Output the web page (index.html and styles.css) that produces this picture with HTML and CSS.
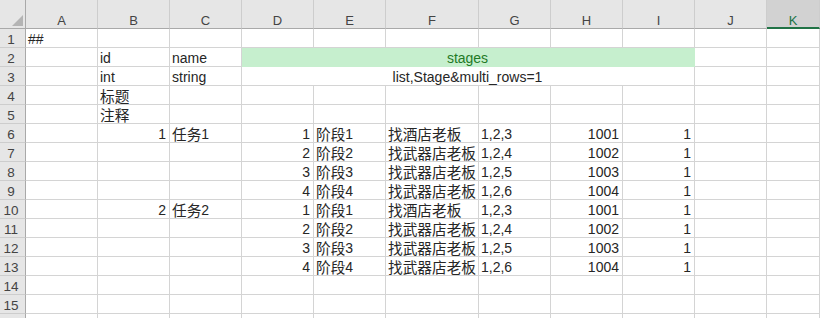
FILE: index.html
```html
<!DOCTYPE html>
<html>
<head>
<meta charset="utf-8">
<link rel="stylesheet" href="styles.css">
</head>
<body>
<div class="sheet">
  <div class="corner"><svg width="25" height="28" viewBox="0 0 25 28"><polygon points="23,15 23,26 12,26" fill="#b4b4b4"/></svg></div>
  <div class="ch">A</div><div class="ch">B</div><div class="ch">C</div><div class="ch">D</div><div class="ch">E</div><div class="ch">F</div><div class="ch">G</div><div class="ch">H</div><div class="ch">I</div><div class="ch">J</div><div class="ch sel">K</div>

  <div class="rh">1</div><div class="c">##</div><div class="c"></div><div class="c"></div><div class="c"></div><div class="c"></div><div class="c"></div><div class="c"></div><div class="c"></div><div class="c"></div><div class="c"></div><div class="c"></div>

  <div class="rh">2</div><div class="c"></div><div class="c">id</div><div class="c">name</div><div class="c m g">stages</div><div class="c"></div><div class="c"></div>

  <div class="rh">3</div><div class="c"></div><div class="c">int</div><div class="c">string</div><div class="c m">list,Stage&amp;multi_rows=1</div><div class="c"></div><div class="c"></div>

  <div class="rh">4</div><div class="c"></div><div class="c"><span class="zh">标题</span></div><div class="c"></div><div class="c"></div><div class="c"></div><div class="c"></div><div class="c"></div><div class="c"></div><div class="c"></div><div class="c"></div><div class="c"></div>

  <div class="rh">5</div><div class="c"></div><div class="c"><span class="zh">注释</span></div><div class="c"></div><div class="c"></div><div class="c"></div><div class="c"></div><div class="c"></div><div class="c"></div><div class="c"></div><div class="c"></div><div class="c"></div>

  <div class="rh">6</div><div class="c"></div><div class="c r">1</div><div class="c"><span class="zh">任务</span>1</div><div class="c r">1</div><div class="c"><span class="zh">阶段</span>1</div><div class="c"><span class="zh">找酒店老板</span></div><div class="c">1,2,3</div><div class="c r">1001</div><div class="c r">1</div><div class="c"></div><div class="c"></div>

  <div class="rh">7</div><div class="c"></div><div class="c"></div><div class="c"></div><div class="c r">2</div><div class="c"><span class="zh">阶段</span>2</div><div class="c"><span class="zh">找武器店老板</span></div><div class="c">1,2,4</div><div class="c r">1002</div><div class="c r">1</div><div class="c"></div><div class="c"></div>

  <div class="rh">8</div><div class="c"></div><div class="c"></div><div class="c"></div><div class="c r">3</div><div class="c"><span class="zh">阶段</span>3</div><div class="c"><span class="zh">找武器店老板</span></div><div class="c">1,2,5</div><div class="c r">1003</div><div class="c r">1</div><div class="c"></div><div class="c"></div>

  <div class="rh">9</div><div class="c"></div><div class="c"></div><div class="c"></div><div class="c r">4</div><div class="c"><span class="zh">阶段</span>4</div><div class="c"><span class="zh">找武器店老板</span></div><div class="c">1,2,6</div><div class="c r">1004</div><div class="c r">1</div><div class="c"></div><div class="c"></div>

  <div class="rh">10</div><div class="c"></div><div class="c r">2</div><div class="c"><span class="zh">任务</span>2</div><div class="c r">1</div><div class="c"><span class="zh">阶段</span>1</div><div class="c"><span class="zh">找酒店老板</span></div><div class="c">1,2,3</div><div class="c r">1001</div><div class="c r">1</div><div class="c"></div><div class="c"></div>

  <div class="rh">11</div><div class="c"></div><div class="c"></div><div class="c"></div><div class="c r">2</div><div class="c"><span class="zh">阶段</span>2</div><div class="c"><span class="zh">找武器店老板</span></div><div class="c">1,2,4</div><div class="c r">1002</div><div class="c r">1</div><div class="c"></div><div class="c"></div>

  <div class="rh">12</div><div class="c"></div><div class="c"></div><div class="c"></div><div class="c r">3</div><div class="c"><span class="zh">阶段</span>3</div><div class="c"><span class="zh">找武器店老板</span></div><div class="c">1,2,5</div><div class="c r">1003</div><div class="c r">1</div><div class="c"></div><div class="c"></div>

  <div class="rh">13</div><div class="c"></div><div class="c"></div><div class="c"></div><div class="c r">4</div><div class="c"><span class="zh">阶段</span>4</div><div class="c"><span class="zh">找武器店老板</span></div><div class="c">1,2,6</div><div class="c r">1004</div><div class="c r">1</div><div class="c"></div><div class="c"></div>

  <div class="rh">14</div><div class="c"></div><div class="c"></div><div class="c"></div><div class="c"></div><div class="c"></div><div class="c"></div><div class="c"></div><div class="c"></div><div class="c"></div><div class="c"></div><div class="c"></div>

  <div class="rh">15</div><div class="c"></div><div class="c"></div><div class="c"></div><div class="c"></div><div class="c"></div><div class="c"></div><div class="c"></div><div class="c"></div><div class="c"></div><div class="c"></div><div class="c"></div>

  <div class="rh"></div><div class="c"></div><div class="c"></div><div class="c"></div><div class="c"></div><div class="c"></div><div class="c"></div><div class="c"></div><div class="c"></div><div class="c"></div><div class="c"></div><div class="c"></div>
</div>
</body>
</html>
```

FILE: styles.css
```css
html, body {
  margin: 0;
  padding: 0;
  background: #ffffff;
  overflow: hidden;
}

.sheet {
  width: 820px;
  height: 318px;
  overflow: hidden;
  display: grid;
  grid-template-columns: 26px 72px 72px 72px 72px 72px 93px 72px 72px 72px 72px 1fr;
  grid-template-rows: 29px;
  grid-auto-rows: 19px;
  font-family: "Liberation Sans", "Noto Sans CJK SC", sans-serif;
  font-size: 14px;
  line-height: 14px;
  color: #262626;
}

.sheet > div {
  box-sizing: border-box;
  display: flex;
  align-items: flex-end;
  white-space: nowrap;
  min-width: 0;
}

.corner {
  background: #e6e6e6;
  border-right: 1px solid #a9a9a9;
  border-bottom: 1px solid #a9a9a9;
  align-items: flex-start !important;
}

.corner svg {
  display: block;
}

.ch {
  background: #e6e6e6;
  border-right: 1px solid #cdcdcd;
  border-bottom: 1px solid #a9a9a9;
  justify-content: center;
  font-size: 13px;
  line-height: 13px;
  color: #444444;
  padding-bottom: 1px;
}

.ch.sel {
  background: #d2d2d2;
  color: #217346;
  border-bottom: 2px solid #217346;
  padding-bottom: 0;
}

.rh {
  background: #e6e6e6;
  border-right: 1px solid #a9a9a9;
  border-bottom: 1px solid #cdcdcd;
  justify-content: center;
  padding-right: 3px;
  font-size: 13.5px;
  line-height: 13px;
  color: #444444;
  padding-bottom: 1px;
}

.c {
  border-right: 1px solid #d4d4d4;
  border-bottom: 1px solid #d4d4d4;
  padding: 0 3px 1px 2px;
}

.c.r {
  justify-content: flex-end;
}

.c.m {
  grid-column: span 6;
  justify-content: center;
}

.c.g {
  background: #c6efce;
  color: #1f7a27;
  border-right-color: #c6efce;
  border-bottom-color: #c6efce;
}

.zh {
  font-family: "Noto Sans CJK SC", sans-serif;
  font-size: 14.67px;
  line-height: 14px;
}
```
